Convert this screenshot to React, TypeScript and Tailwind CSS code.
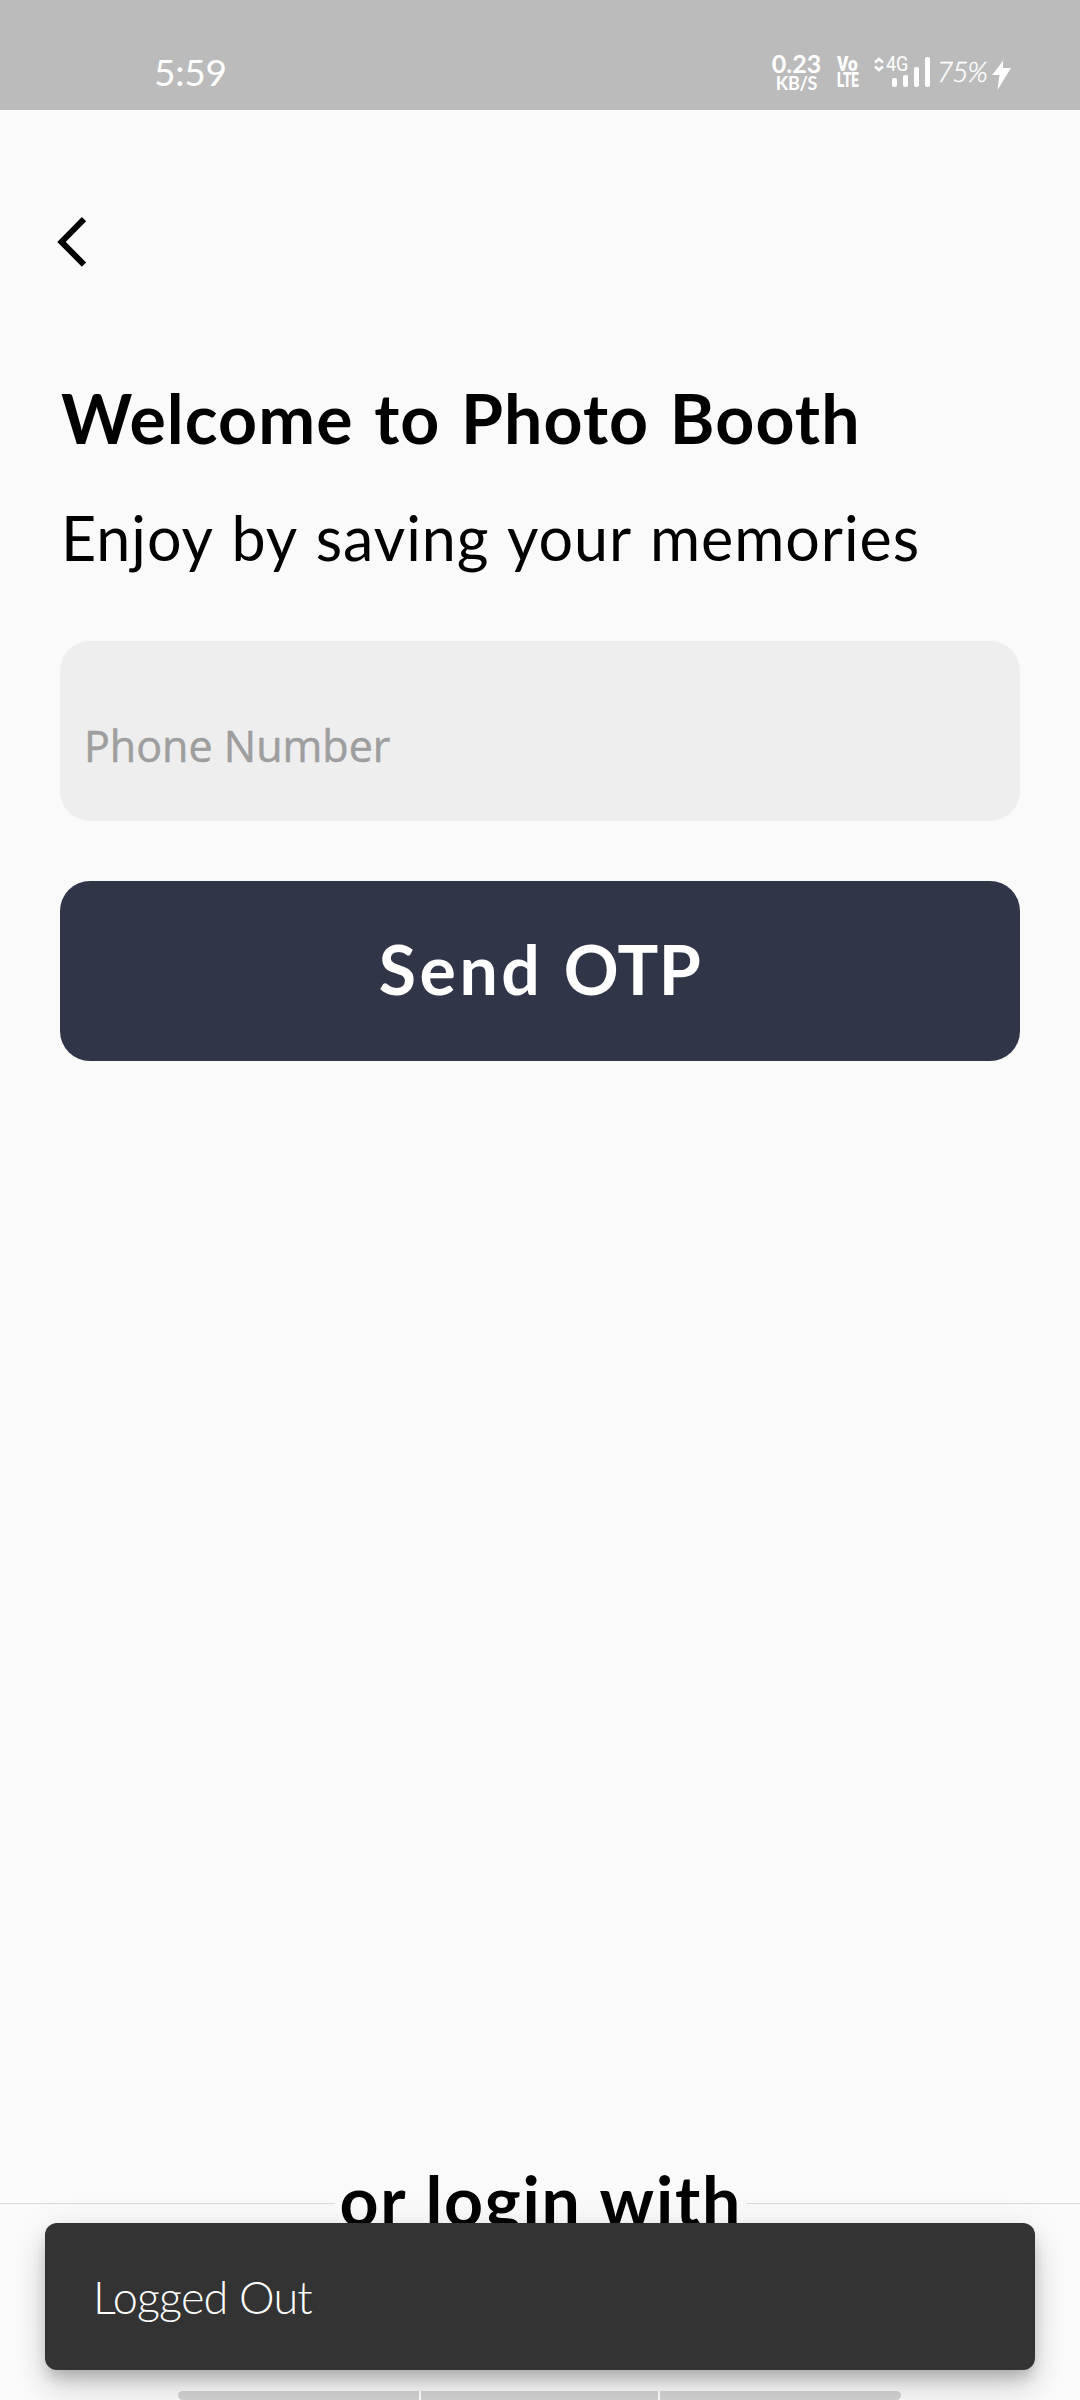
import React from "react";

function StatusBar() {
  return (
    <header className="flex h-[110px] shrink-0 items-start bg-[#bbbbbb] pl-[154px] pr-[68px] text-white">
      <time className="mt-[50px] text-[37px] leading-[44px] tracking-[-0.2px]">5:59</time>
      <div className="ml-auto flex items-start">
        <div className="mt-[53px] flex w-[49px] flex-col items-center font-bold">
          <span className="text-[25px] leading-[20px]">0.23</span>
          <span className="mt-[2px] text-[18px] leading-[16px] tracking-[-0.3px]">KB/S</span>
        </div>
        <div className="ml-4 mt-[57px] flex w-[22px] flex-col font-[Roboto] text-[20px] font-black leading-[15px]">
          <span className="origin-left scale-x-[0.86]">Vo</span>
          <span className="mt-px origin-left scale-x-[0.67]">LTE</span>
        </div>
        <svg className="ml-[15px] mt-[57px] h-[15px] w-[10px]" viewBox="0 0 10 15" fill="none" stroke="white" strokeWidth="2.6">
          <path d="M1 5.500 5 2 9 5.500M1 9.500 5 13 9 9.500" />
        </svg>
        <div className="mt-[57px] h-[30px] w-[48px]">
          <div className="flex">
            <span className="ml-[2px] w-[26px] origin-left scale-x-[0.9] font-[Roboto] text-[20px] leading-[15px]">4G</span>
          </div>
          <div className="-mt-[15px] ml-[8px] flex h-[30px] items-end gap-[6px]">
            <i className="h-[9px] w-[5px] rounded-[2px] bg-white" />
            <i className="h-[12px] w-[5px] rounded-[2px] bg-white" />
            <i className="h-[20px] w-[5px] rounded-[2px] bg-white" />
            <i className="h-[30px] w-[5px] rounded-[2px] bg-white" />
          </div>
        </div>
        <span className="ml-[5px] mt-[57px] w-[55px] text-[28px] font-light italic leading-[28px] tracking-[-1px] [-webkit-text-stroke:0.4px_white]">75%</span>
        <svg className="mt-[55px] h-[36px] w-[20px]" viewBox="0 0 20 36" fill="white">
          <path d="M11 6 0 20h7.500L5.500 35 19 13h-8z" />
          <path d="M13.500 0 11 6v7l-3-2z" opacity="0.5" />
        </svg>
      </div>
    </header>
  );
}

function BottomTabs() {
  return (
    <div className="ml-[178px] flex h-[9px] w-[723px] gap-[2px] overflow-hidden bg-white">
      <div className="w-[241px] rounded-l-[4.5px] bg-[#d3d3d3]" />
      <div className="w-[237px] bg-[#d3d3d3]" />
      <div className="flex-1 rounded-r-[4.5px] bg-[#d3d3d3]" />
    </div>
  );
}

export default function App() {
  return (
    <div className="relative flex h-[2400px] w-[1080px] flex-col overflow-hidden whitespace-nowrap bg-[#fafafa] font-['Lato',sans-serif] text-black">
      <StatusBar />
      <main className="flex flex-1 flex-col px-[60px]">
        <button aria-label="Back" className="-ml-[3px] mt-[107px] h-[50px] w-[30px]">
          <svg className="h-[50px] w-[30px]" viewBox="0 0 30 50" fill="none" stroke="black" strokeWidth="6">
            <path d="M27 2.200 4.500 24.900 27 47.600" />
          </svg>
        </button>
        <h1 className="ml-[1px] mt-[111px] text-[68px] font-bold leading-[80px] tracking-[1.08px] [word-spacing:3px]">Welcome to Photo Booth</h1>
        <p className="ml-[1px] mt-[42px] text-[61px] leading-[76px] tracking-[0.95px] [word-spacing:2.5px]">Enjoy by saving your memories</p>
        <div className="mt-[65px] h-[180px] rounded-[30px] bg-[#eeeeee] pl-[24px] pt-[75px]">
          <span className="block font-['Open_Sans'] text-[43px] leading-[60px] text-[#9e9e9e] [-webkit-text-stroke:0.5px_#9e9e9e]">Phone Number</span>
        </div>
        <button className="mt-[60px] h-[180px] rounded-[30px] bg-[#303548] pb-[4px] text-[68px] font-bold text-white">
          <span className="tracking-[3.6px]">Send </span>
          <span className="tracking-[0.5px]">OTP</span>
        </button>
      </main>
      <div className="flex h-[80px] items-center">
        <div className="mt-[7px] h-px flex-1 bg-[#dbdbdb]" />
        <span className="mx-[5px] w-[401px] text-center text-[68px] font-bold leading-[80px] tracking-[1.8px] [word-spacing:1px]">or login with</span>
        <div className="mt-[7px] h-px flex-1 bg-[#dbdbdb]" />
      </div>
      <div className="mt-[151px]">
        <BottomTabs />
      </div>
      <div className="absolute bottom-[30px] left-[45px] h-[147px] w-[990px] rounded-[12px] bg-[#333333] pl-[48px] text-[45px] font-light leading-[148px] tracking-[-0.8px] text-white shadow-[0_9px_15px_-3px_rgba(0,0,0,0.2),0_18px_30px_rgba(0,0,0,0.14),0_3px_40px_rgba(0,0,0,0.06)]">
        Logged Out
      </div>
    </div>
  );
}
